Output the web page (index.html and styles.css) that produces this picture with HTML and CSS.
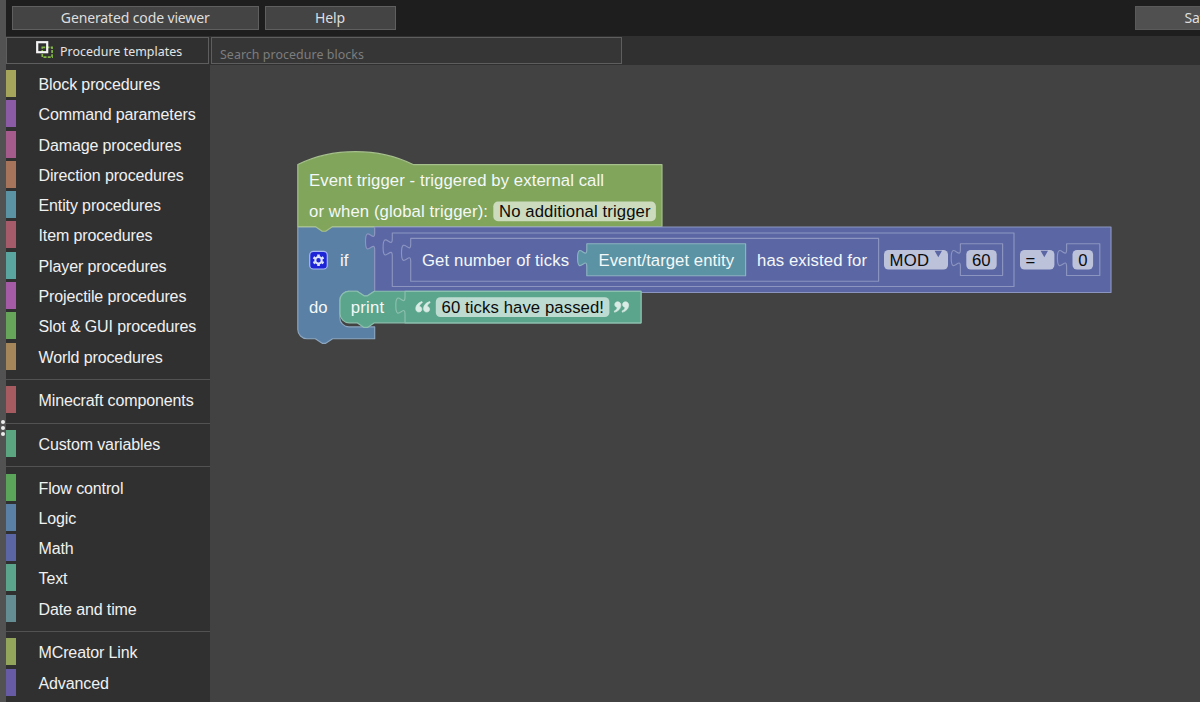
FILE: index.html
```html
<!DOCTYPE html>
<html lang="en">
<head>
<meta charset="utf-8">
<title>Procedure editor</title>
<link rel="stylesheet" href="styles.css">
</head>
<body>
<div class="app">
  <div class="splitter"><i></i><i></i><i></i></div>
  <div class="editor">
    <header class="topbar">
      <button class="btn viewer">Generated code viewer</button>
      <button class="btn help">Help</button>
      <button class="btn save">Save</button>
    </header>
    <div class="toolbar">
      <button class="templates">
        <svg width="18" height="18" viewBox="0 0 18 18" fill="none">
          <rect x="6.3" y="6.3" width="9.8" height="9.8" stroke="#83b944" stroke-width="1.7" stroke-dasharray="3 1.2"/>
          <rect x="1.2" y="1.2" width="10" height="10" stroke="#f4f4f4" stroke-width="2.2"/>
        </svg>
        <span>Procedure templates</span>
      </button>
      <div class="search">Search procedure blocks</div>
    </div>
    <div class="main">
      <nav class="toolbox">
        <div class="group">
          <div class="cat c-block">Block procedures</div>
          <div class="cat c-command">Command parameters</div>
          <div class="cat c-damage">Damage procedures</div>
          <div class="cat c-direction">Direction procedures</div>
          <div class="cat c-entity">Entity procedures</div>
          <div class="cat c-item">Item procedures</div>
          <div class="cat c-player">Player procedures</div>
          <div class="cat c-projectile">Projectile procedures</div>
          <div class="cat c-slot">Slot &amp; GUI procedures</div>
          <div class="cat c-world">World procedures</div>
        </div>
        <div class="group"><div class="cat c-minecraft">Minecraft components</div></div>
        <div class="group"><div class="cat c-custom">Custom variables</div></div>
        <div class="group">
          <div class="cat c-flow">Flow control</div>
          <div class="cat c-logic">Logic</div>
          <div class="cat c-math">Math</div>
          <div class="cat c-text">Text</div>
          <div class="cat c-date">Date and time</div>
        </div>
        <div class="group">
          <div class="cat c-link">MCreator Link</div>
          <div class="cat c-advanced">Advanced</div>
        </div>
      </nav>
      <svg class="workspace" width="990" height="637" viewBox="210 65 990 637">
        <!-- if / do -->
        <path class="b-logic" d="M297.8 226.8H374.7V291.2H374.4l-6.9 4.6h-3.5l-6.9-4.6H349a9.2 9.2 0 0 0-9.2 9.2v17.3a9.2 9.2 0 0 0 9.2 9.2H374.7V338.7H332.6l-6.9 4.6h-3.5l-6.9-4.6H307a9.2 9.2 0 0 1-9.2-9.2Z"/>
        <!-- event trigger -->
        <path class="b-event" d="M297.8 164.6c34.6-17.3 80.7-17.3 115.3 0H662V226.6H332.6l-6.9 4.6h-3.5l-6.9-4.6H297.8Z"/>
        <!-- comparison, modulo, ticks -->
        <path class="b-math" d="M374.7 227H1111V292.5H374.7V250c0-11.5-9.2 9.2-9.2-8.6s9.2 2.9 9.2-8.6Z"/>
        <path class="b-math" d="M392.3 233H1014V286.5H392.3V256c0-11.5-9.2 9.2-9.2-8.6s9.2 2.9 9.2-8.6Z"/>
        <path class="b-math" d="M410.7 238.4H878.6V281.2H410.7V261.4c0-11.5-9.2 9.2-9.2-8.6s9.2 2.9 9.2-8.6Z"/>
        <path class="b-entity" d="M586.8 243.7H745.6V275.7H586.8V266.7c0-11.5-9.2 9.2-9.2-8.6s9.2 2.9 9.2-8.6Z"/>
        <path class="b-math" d="M960.4 243.7H1002.6V275.5H960.4V266.7c0-11.5-9.2 9.2-9.2-8.6s9.2 2.9 9.2-8.6Z"/>
        <path class="b-math" d="M1066.6 243.7H1099.8V275.5H1066.6V266.7c0-11.5-9.2 9.2-9.2-8.6s9.2 2.9 9.2-8.6Z"/>
        <!-- print -->
        <path class="b-text" d="M349.2 291.2H357.1l6.9 4.6h3.5l6.9-4.6H641V322.8H374.4l-6.9 4.6h-3.5l-6.9-4.6H349.2a9.2 9.2 0 0 1-9.2-9.2V300.4a9.2 9.2 0 0 1 9.2-9.2Z"/>
        <path class="b-text" d="M405 291.4H641V322.8H405V314.2c0-11.5-9.2 9.2-9.2-8.6s9.2 2.9 9.2-8.6Z"/>

        <g class="field">
          <rect x="493.3" y="201.6" width="162.6" height="19.6" rx="4.6"/>
          <rect x="884" y="250" width="64" height="19.6" rx="4.6"/>
          <rect x="966.3" y="250" width="30.4" height="19.6" rx="4.6"/>
          <rect x="1020" y="250" width="34.4" height="19.6" rx="4.6"/>
          <rect x="1072.5" y="250" width="20.6" height="19.6" rx="4.6"/>
          <rect x="435.8" y="297.2" width="173.6" height="19.8" rx="4.6"/>
        </g>
        <path class="arrow" d="M934.6 250.7h7.4l-3.7 6.6ZM1040.6 250.7h7.4l-3.7 6.6Z"/>

        <!-- mutator gear -->
        <rect x="309.7" y="251.4" width="17.6" height="17.6" rx="3.8" fill="#1d24d8" stroke="#a9b9f5" stroke-width="1.2"/>
        <g transform="translate(318.5 260.2)">
          <path d="M-1.3-5.8h2.6v2h-2.6zM-1.3 3.8h2.6v2h-2.6z" fill="#dfe6ff"/>
          <path d="M-1.3-5.8h2.6v2h-2.6zM-1.3 3.8h2.6v2h-2.6z" fill="#dfe6ff" transform="rotate(60)"/>
          <path d="M-1.3-5.8h2.6v2h-2.6zM-1.3 3.8h2.6v2h-2.6z" fill="#dfe6ff" transform="rotate(120)"/>
          <circle r="3.2" fill="none" stroke="#dfe6ff" stroke-width="2"/>
        </g>

        <!-- quotation marks -->
        <g fill="#d9ebe4" stroke="#d9ebe4" stroke-width="0.7">
          <path id="q" d="M422 301.6c-3.8 1.1-6.2 3.8-6.2 7.1 0 2 1.3 3.3 3.1 3.3 1.7 0 2.9-1.2 2.9-2.8 0-1.5-1-2.5-2.5-2.7.2-1.6 1.2-2.9 3-3.8ZM429.8 301.6c-3.8 1.1-6.2 3.8-6.2 7.1 0 2 1.3 3.3 3.1 3.3 1.7 0 2.9-1.2 2.9-2.8 0-1.5-1-2.5-2.5-2.7.2-1.6 1.2-2.9 3-3.8Z"/>
          <use href="#q" transform="rotate(180 522.2 306.9)"/>
        </g>

        <g class="label">
          <text x="309" y="186.3" textLength="295">Event trigger - triggered by external call</text>
          <text x="309" y="217.2" textLength="179">or when (global trigger):</text>
          <text x="340" y="265.6">if</text>
          <text x="309" y="313">do</text>
          <text x="350.7" y="313" textLength="33.4">print</text>
          <text x="422" y="265.6" textLength="147">Get number of ticks</text>
          <text x="598.5" y="265.6" textLength="135.5">Event/target entity</text>
          <text x="757" y="265.6" textLength="110">has existed for</text>
        </g>
        <g class="label dark">
          <text x="499" y="217.2" textLength="151.5">No additional trigger</text>
          <text x="889.5" y="265.6" textLength="39.5">MOD</text>
          <text x="972" y="265.6">60</text>
          <text x="1025.5" y="265.6">=</text>
          <text x="1078.2" y="265.6">0</text>
          <text x="441.5" y="313" textLength="162.5">60 ticks have passed!</text>
        </g>
      </svg>
    </div>
  </div>
</div>
</body>
</html>
```

FILE: styles.css
```css
* { box-sizing: border-box; }
body {
  margin: 0;
  background: #424242;
  overflow: hidden;
  font-family: "Liberation Sans", Arial, sans-serif;
}
button { margin: 0; padding: 0; font: inherit; color: inherit; }
.app { display: flex; width: 1200px; height: 702px; overflow: hidden; }

.splitter {
  width: 6px;
  flex: none;
  background: #525252;
  display: flex;
  flex-direction: column;
  align-items: flex-start;
  gap: 2px;
  padding: 420px 0 0 0.5px;
}
.splitter i { width: 4px; height: 4px; border-radius: 50%; background: #ececec; }

.editor { flex: none; width: 1194px; display: flex; flex-direction: column; }

.topbar {
  height: 36px;
  flex: none;
  display: flex;
  padding: 6px 0 0 5.5px;
  background: #1e1e1e;
  overflow: hidden;
}
.btn {
  flex: none;
  height: 24px;
  border: 1px solid #5f5f5f;
  background: #444;
  color: #dedede;
  font: 14px/22px "Noto Sans", sans-serif;
  letter-spacing: -0.13px;
}
.viewer { width: 247.5px; }
.help { width: 131px; margin-left: 5.5px; }
.save { width: 129px; margin-left: 739.5px; background: #505050; border-color: #5a5a5a; }

.toolbar {
  height: 29px;
  flex: none;
  display: flex;
  gap: 2px;
  padding-top: 1px;
  background: #303030;
}
.templates {
  width: 203px;
  height: 27px;
  border: 1px solid #5e5e5e;
  background: #303030;
  display: flex;
  align-items: center;
  padding-left: 29px;
  gap: 6px;
  color: #e4e4e4;
  font: 12.4px/24px "Noto Sans", sans-serif;
  letter-spacing: 0.05px;
}
.templates svg { position: relative; top: -1px; }
.templates span { padding-top: 2px; white-space: nowrap; }
.search {
  width: 411px;
  height: 27px;
  border: 1px solid #5e5e5e;
  background: #363636;
  color: #7d7d7d;
  padding: 5px 0 0 8px;
  font: 12.4px/24px "Noto Sans", sans-serif;
  letter-spacing: 0.06px;
}

.main { display: flex; flex: 1; min-height: 0; }
.toolbox { width: 204px; flex: none; background: #303030; padding-top: 4.9px; overflow: hidden; }
.group { display: flow-root; }
.group + .group { border-top: 1px solid #525252; margin-top: 6px; padding-top: 6.3px; }
.cat {
  height: 27px;
  margin-bottom: 3.32px;
  border-left: 10px solid;
  padding-left: 22.5px;
  font-size: 16px;
  letter-spacing: -0.12px;
  line-height: 29px;
  white-space: nowrap;
  color: #f0f0f0;
}
.c-block { border-color: #a5a55b; }
.c-command { border-color: #8c5ba5; }
.c-damage { border-color: #a55b8c; }
.c-direction { border-color: #a5745b; }
.c-entity { border-color: #5b93a5; }
.c-item { border-color: #a55b6a; }
.c-player { border-color: #5ba5a0; }
.c-projectile { border-color: #a55ba5; }
.c-slot { border-color: #67a55b; }
.c-world { border-color: #a5865b; }
.c-minecraft { border-color: #a55b60; }
.c-custom { border-color: #5ba580; }
.c-flow { border-color: #5ba55b; }
.c-logic { border-color: #5b80a5; }
.c-math { border-color: #5b67a5; }
.c-text { border-color: #5ba58c; }
.c-date { border-color: #648c93; }
.c-link { border-color: #93a55b; }
.c-advanced { border-color: #675ba5; }

.workspace { flex: none; display: block; }
.workspace path { stroke-linejoin: round; }
.b-event { fill: #80a55b; stroke: #a6c08c; }
.b-logic { fill: #5b80a5; stroke: #8ca6c0; }
.b-math { fill: #5b67a5; stroke: #8c95c0; }
.b-entity { fill: #5b93a5; stroke: #8cb3c0; }
.b-text { fill: #5ba58c; stroke: #8cc0ae; }
.b-event, .b-logic, .b-math, .b-entity, .b-text { stroke-width: 1.15; }
.field rect { fill: #fff; fill-opacity: 0.6; }
.arrow { fill: #5b67a5; }
.label { font: 16.7px "Liberation Sans", Arial, sans-serif; fill: #f5f8f8; }
.dark { fill: #0c0c0c; }
```
